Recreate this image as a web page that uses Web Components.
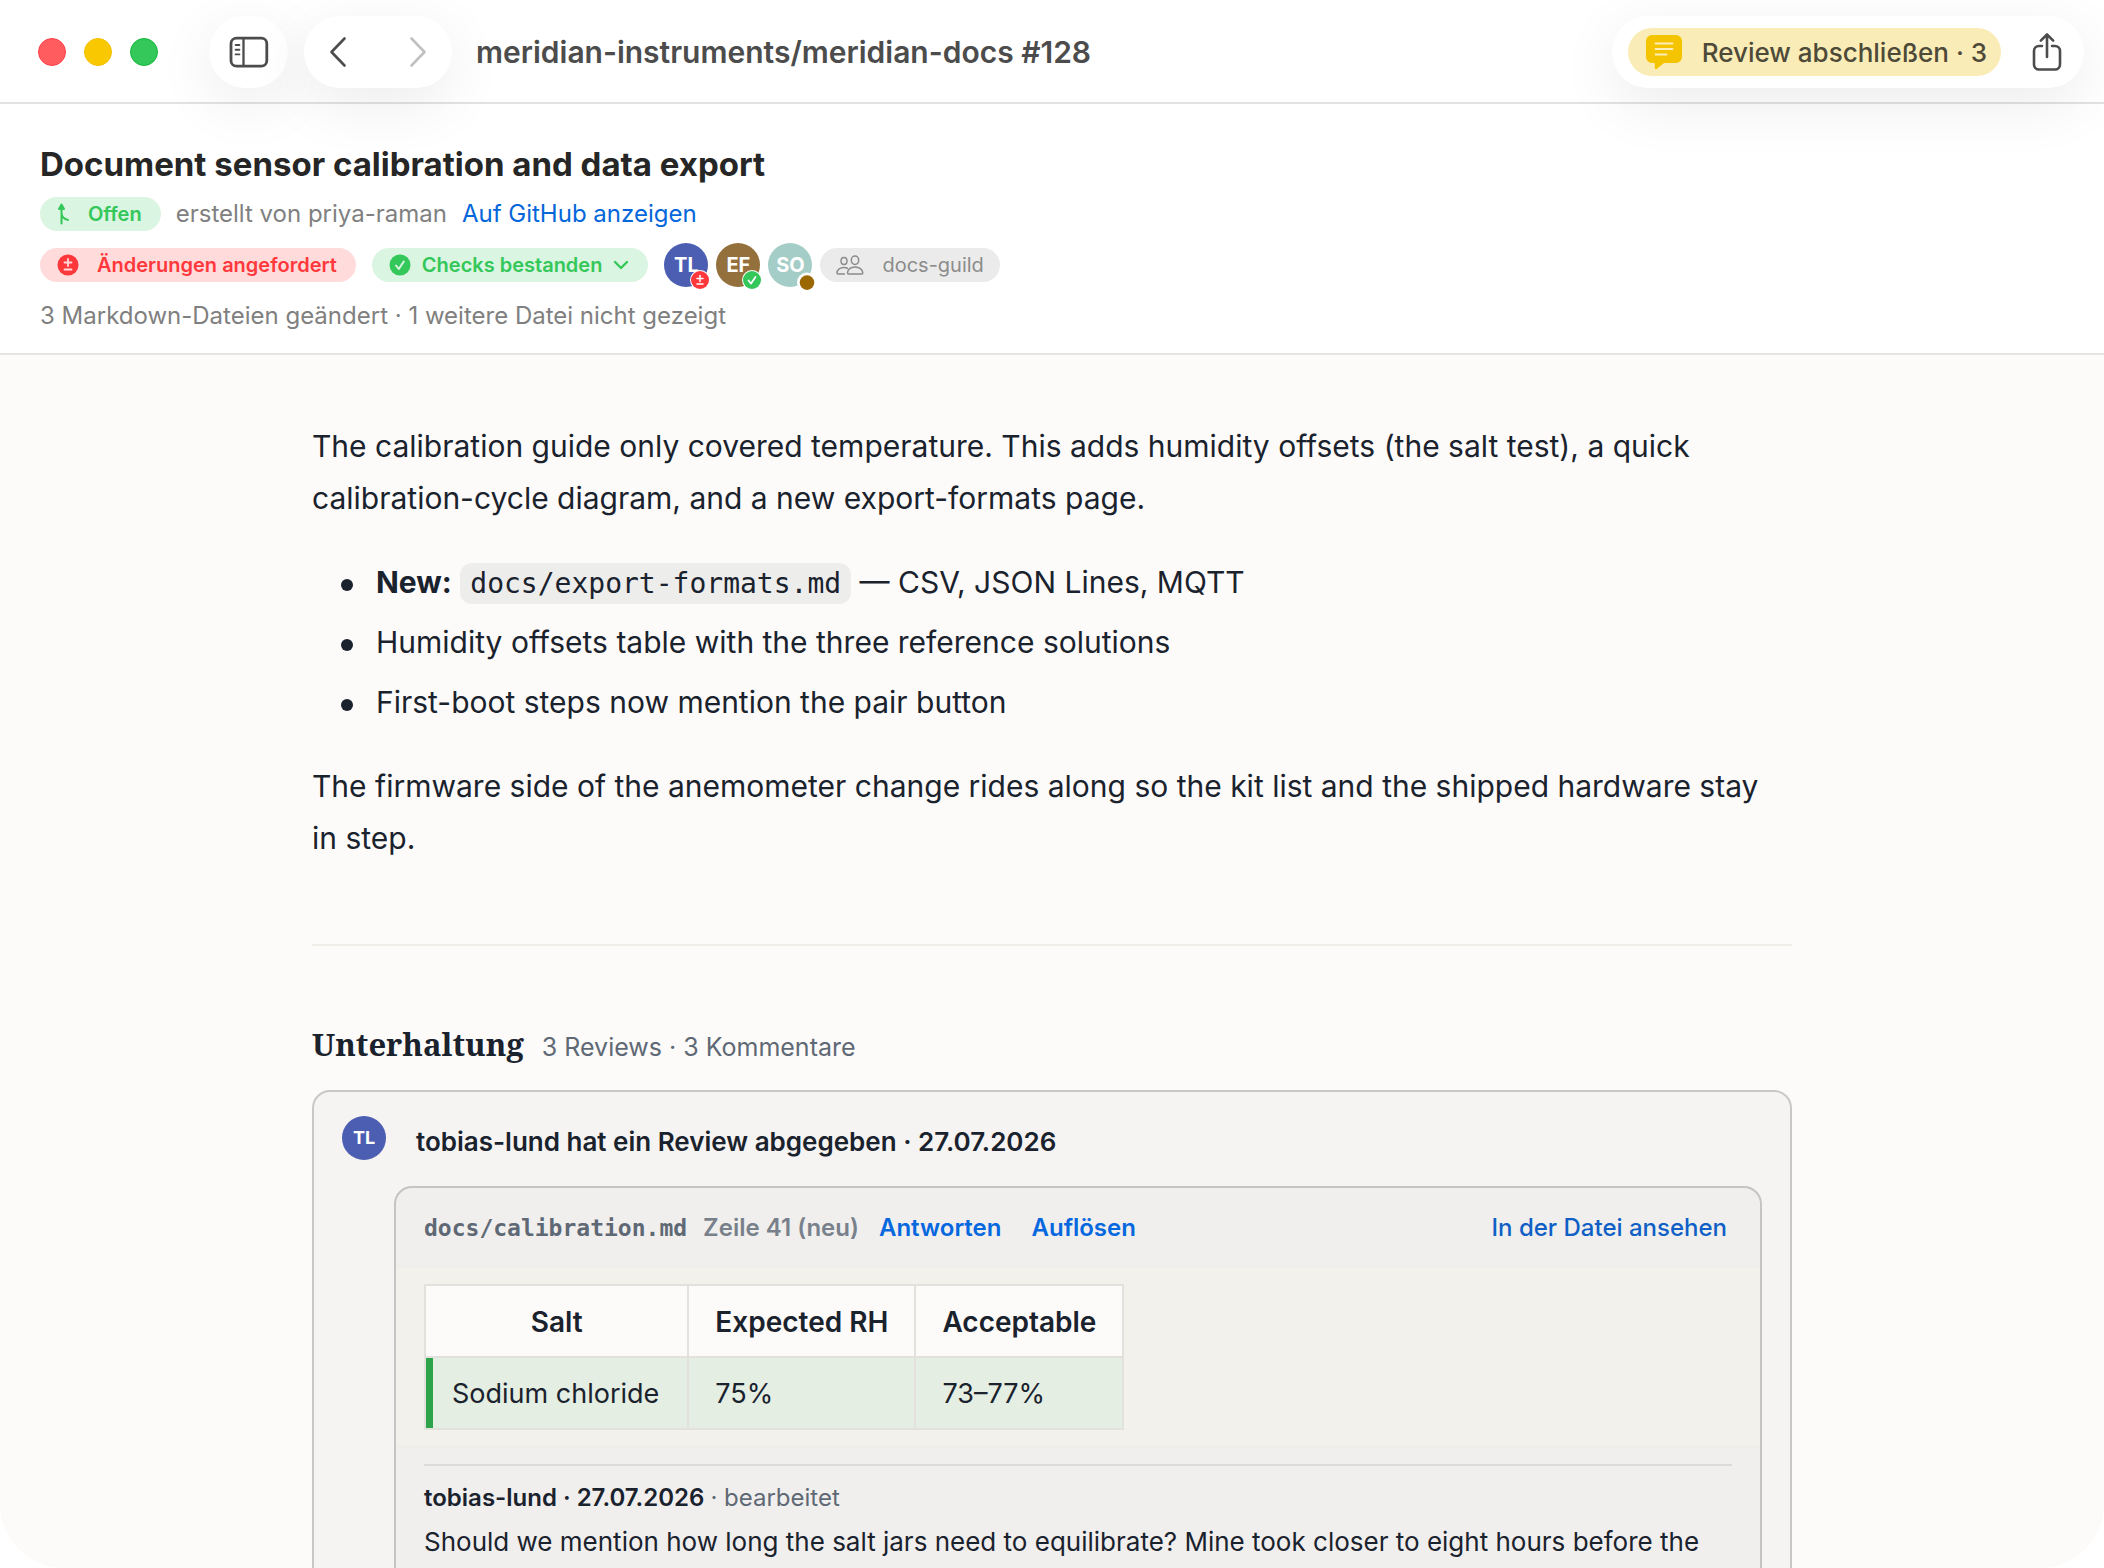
<!DOCTYPE html>
<html lang="de">
<head>
<meta charset="utf-8">
<meta name="viewport" content="width=device-width, initial-scale=1">
<title>meridian-instruments/meridian-docs #128</title>
<style>
  :root {
    --ui: Inter, "Liberation Sans", sans-serif;
    --mono: "DejaVu Sans Mono", "Liberation Mono", monospace;
    --serif: "Noto Serif", "Liberation Serif", serif;
    --ink: #1a222d;
    --muted: #5f6975;
    --link: #0366da;
    --paper: #fcfbf9;
    --fs-s: 20px;
    --fs-m: 24px;
    --fs-l: 26px;
    --fs-xl: 30px;
  }
  html, body { margin: 0; height: 100%; background: #fff; }
  body { font-family: var(--ui); overflow: hidden; color: var(--ink); }
</style>
</head>
<body>
<app-window>
  <app-toolbar slot="toolbar" heading="meridian-instruments/meridian-docs #128"></app-toolbar>
  <pr-header slot="header"></pr-header>
  <pr-description></pr-description>
  <pr-conversation>
    <review-card initials="TL" heading="tobias-lund hat ein Review abgegeben · 27.07.2026">
      <review-thread path="docs/calibration.md" line="Zeile 41 (neu)">
        <diff-table slot="context"></diff-table>
        <thread-comment author="tobias-lund · 27.07.2026" note="· bearbeitet">Should we mention how long the salt jars need to equilibrate? Mine took closer to eight hours before the</thread-comment>
      </review-thread>
    </review-card>
  </pr-conversation>
</app-window>

<script>
const define = (name, html) => customElements.define(name, class extends HTMLElement {
  constructor() {
    super();
    const root = this.attachShadow({ mode: "open" });
    const tpl = document.createElement("template");
    tpl.innerHTML = "<style>:host,*{box-sizing:border-box}</style>" + (typeof html === "function" ? html(this) : html);
    root.append(tpl.content.cloneNode(true));
  }
});

define("app-window", `
<style>
  :host { display: flex; flex-direction: column; height: 100vh; overflow: hidden;
    border-radius: 0 0 64px 64px; background: var(--paper); }
  .top { position: relative; z-index: 1; }
  main { flex: 1; min-height: 0; overflow: hidden; padding: 65px 40px 0; }
  .column { max-width: 1480px; margin: 0 auto; }
</style>
<div class="top"><slot name="toolbar"></slot></div>
<slot name="header"></slot>
<main><div class="column"><slot></slot></div></main>`);

define("tool-group", `
<style>
  :host { display: flex; align-items: center; height: 72px; border-radius: 36px; background: #fff;
    box-shadow: 0 16px 60px rgba(0,0,0,.08); }
</style><slot></slot>`);

define("window-lights", `
<style>
  :host { display: flex; gap: 18px; }
  button { width: 28px; height: 28px; padding: 0; border: 1px solid; border-radius: 50%; }
  .close { background: #ff5c60; border-color: #fb4248; }
  .min { background: #fac800; border-color: #f3c000; }
  .zoom { background: #34c759; border-color: #14b83c; }
</style>
<button class="close" aria-label="Schließen"></button>
<button class="min" aria-label="Minimieren"></button>
<button class="zoom" aria-label="Vollbild"></button>`);

define("app-toolbar", el => `
<style>
  :host { display: flex; align-items: center; height: 104px; padding: 2px 20px 0 38px;
    background: #fff; border-bottom: 2px solid #e2e2e2; }
  window-lights { margin-right: 51px; }
  .nav { margin: 0 24px 0 16px; gap: 12px; }
  h1 { flex: 1; margin: 0; font-size: var(--fs-xl); line-height: 36px; font-weight: 600; color: #4c4c4c; white-space: nowrap; }
  button { display: flex; align-items: center; justify-content: center; padding: 0; border: 0; background: none;
    font: inherit; color: #4c4c4c; height: 72px; }
  .side { width: 79px; }
  .nav button { width: 68px; }
  .nav button:disabled { color: #c0c0c0; }
  .finish { height: 48px; margin-left: 16px; padding: 0 14px 0 18px; gap: 20px; border-radius: 24px; background: #faecb6;
    color: #4d4a39; font-size: var(--fs-l); font-weight: 500; white-space: nowrap; }
  .share { width: 83px; padding-left: 9px; }
  svg { flex: none; }
  .line { fill: none; stroke: currentColor; stroke-linecap: round; stroke-linejoin: round; }
</style>
<window-lights></window-lights>
<tool-group><button class="side" aria-label="Seitenleiste">
  <svg class="line" width="40" height="32" viewBox="0 0 40 32" stroke-width="2.8"><rect x="2" y="2.2" width="35.800" height="28" rx="5.5"/><path d="M14.500 2.500v27" stroke-width="2.3"/><path d="M6.600 9h3.800M6.600 13.700h3.800M6.600 18.400h3.800" stroke-width="1.9"/></svg>
</button></tool-group>
<tool-group class="nav">
  <button aria-label="Zurück"><svg class="line" width="18" height="32" viewBox="0 0 18 32" stroke-width="2.6"><path d="M15.500 2.500 2.500 16l13 13.500"/></svg></button>
  <button aria-label="Vorwärts" disabled><svg class="line" width="18" height="32" viewBox="0 0 18 32" stroke-width="2.6"><path d="M2.500 2.500 15.500 16l-13 13.500"/></svg></button>
</tool-group>
<h1>${el.getAttribute("heading")}</h1>
<tool-group>
  <button class="finish">
    <svg width="36" height="36" viewBox="0 0 36 36"><path fill="#f5c400" d="M6 1h24a6 6 0 0 1 6 6v16a6 6 0 0 1-6 6H18l-7 5.800c-1 .8-2.200.4-2.200-1V29H6a6 6 0 0 1-6-6V7a6 6 0 0 1 6-6z"/><path d="M9.500 9.500h17M9.500 15h17M9.500 20.500h11" fill="none" stroke="#fbeeb9" stroke-width="1.8" stroke-linecap="round"/></svg>
    <span>Review abschließen · 3</span>
  </button>
  <button class="share" aria-label="Teilen">
    <svg class="line" width="32" height="40" viewBox="0 0 32 40" stroke-width="2.6"><path d="M11 14H8a5 5 0 0 0-5 5v13.500a5 5 0 0 0 5 5h16a5 5 0 0 0 5-5V19a5 5 0 0 0-5-5h-3M16 25V3M9.800 8.700 16 2.500l6.200 6.200"/></svg>
  </button>
</tool-group>`);

define("status-pill", `
<style>
  :host { display: inline-flex; align-items: center; height: 34px; padding: 0 19px 0 17px; border-radius: 17px;
    font-size: var(--fs-s); line-height: 24px; font-weight: 600; white-space: nowrap; }
  :host([tone="green"]) { background: #daf5e1; color: #34c759; }
  :host([tone="red"]) { background: #ffdbdb; color: #ff383c; }
  :host([tone="gray"]) { background: #ebebeb; color: #8c8c8c; font-weight: 400; padding: 0 16px; }
</style><slot></slot>`);

define("user-avatar", el => `
<style>
  :host { position: relative; display: inline-flex; align-items: center; justify-content: center;
    width: 44px; height: 44px; flex: none; border-radius: 50%; color: #fff; background: var(--tint, #4b5eb2);
    font-size: ${el.getAttribute("size") || "20px"}; font-weight: 700; line-height: 1; }
  .badge { position: absolute; right: -2px; bottom: -3px; display: flex; }
</style>
<span>${el.getAttribute("initials")}</span><span class="badge"><slot></slot></span>`);

define("pr-header", `
<style>
  :host { display: flex; flex-direction: column; gap: 6px; background: #fff; padding: 38px 40px 15px; border-bottom: 2px solid #e4e4e3; }
  h2 { margin: 0; font-size: 33px; line-height: 44px; font-weight: 700; color: #262626; }
  .row { display: flex; align-items: center; height: 44px; font-size: var(--fs-m); line-height: 32px; color: #808080; white-space: nowrap; }
  .row.meta { gap: 15px; }
  .rows { display: flex; flex-direction: column; gap: 7px; }
  a { color: var(--link); text-decoration: none; }
  svg { flex: none; }
  .avatars { display: flex; gap: 8px; margin: 0 8px 0 16px; }
  status-pill + status-pill { margin-left: 16px; }
  .toggle { display: flex; align-items: center; border: 0; background: none; padding: 0; font: inherit; color: inherit; gap: 11px; }
</style>
<h2>Document sensor calibration and data export</h2>
<div class="rows">
<div class="row meta">
  <status-pill tone="green"><svg width="14" height="22" viewBox="0 0 14 22" fill="none" stroke="currentColor" stroke-width="2" stroke-linecap="round" stroke-linejoin="round" style="margin-right:17px"><path d="M4.500 20.500V5M4.500 10c0 3.800 1.500 5.700 6.500 7"/><path d="M4.500 1.500 7 6H2z" fill="currentColor"/></svg>Offen</status-pill>
  <span>erstellt von priya-raman</span>
  <a href="#github">Auf GitHub anzeigen</a>
</div>
<div class="row">
  <status-pill tone="red"><svg width="22" height="22" viewBox="0 0 22 22" style="margin-right:18px"><circle cx="11" cy="11" r="10.5" fill="currentColor"/><path d="M11 5v7M7.500 8.500h7M7.500 15.500h7" stroke="#ffdbdb" stroke-width="1.8" stroke-linecap="round"/></svg>Änderungen angefordert</status-pill>
  <status-pill tone="green"><button class="toggle"><svg width="22" height="22" viewBox="0 0 22 22"><circle cx="11" cy="11" r="10.5" fill="currentColor"/><path d="m7 11.500 2.800 3.500 5-7.500" fill="none" stroke="#daf5e1" stroke-width="2" stroke-linecap="round" stroke-linejoin="round"/></svg><span>Checks bestanden</span><svg width="16" height="10" viewBox="0 0 16 10" fill="none" stroke="currentColor" stroke-width="2.4" stroke-linecap="round" stroke-linejoin="round"><path d="m2 2 6 6 6-6"/></svg></button></status-pill>
  <div class="avatars">
    <user-avatar initials="TL"><svg width="20" height="20" viewBox="0 0 20 20"><circle cx="10" cy="10" r="10" fill="#fff"/><circle cx="10" cy="10" r="9" fill="#ff383c"/><path d="M10 5.500v6M7 8.500h6M7 14h6" stroke="#fff" stroke-width="1.5" stroke-linecap="round"/></svg></user-avatar>
    <user-avatar initials="EF" style="--tint:#94703d"><svg width="20" height="20" viewBox="0 0 20 20"><circle cx="10" cy="10" r="10" fill="#fff"/><circle cx="10" cy="10" r="9" fill="#34c759"/><path d="m6.500 10.500 2.500 3 4.500-6.500" fill="none" stroke="#fff" stroke-width="1.8" stroke-linecap="round" stroke-linejoin="round"/></svg></user-avatar>
    <user-avatar initials="SO" style="--tint:#a5cdc7"><svg width="20" height="20" viewBox="0 0 20 20" overflow="visible"><circle cx="13" cy="12.6" r="10" fill="#fff"/><circle cx="13" cy="12.6" r="7.3" fill="#9b6700"/></svg></user-avatar>
  </div>
  <status-pill tone="gray"><svg width="28" height="20" viewBox="0 0 28 20" fill="none" stroke="currentColor" stroke-width="1.5" stroke-linejoin="round" style="margin-right:18px"><ellipse cx="19" cy="5.2" rx="3.7" ry="4.2"/><path d="M11.500 18c0-3.500 3.200-6 7.500-6s7.800 2.500 7.800 6c0 .6-.4.900-1 .9H12.500c-.6 0-1-.3-1-.9z"/><ellipse cx="8" cy="6" rx="3" ry="3.5"/><path d="M9 18.900H2c-.7 0-1-.3-1-.9 0-3 2.800-5.500 6.800-5.500 1.800 0 3.200.4 4.200 1.100"/></svg>docs-guild</status-pill>
</div>
<div class="row">3 Markdown-Dateien geändert · 1 weitere Datei nicht gezeigt</div>
</div>`);

define("pr-description", `
<style>
  :host { display: block; font-size: var(--fs-xl); line-height: 52px; padding-bottom: 80px; border-bottom: 2px solid #efeee9; }
  p, ul { margin: 0 0 32px; }
  p:last-child { margin: 0; }
  ul { padding-left: 64px; list-style: none; }
  li::before { content: ""; display: inline-block; width: 12px; height: 12px; margin: 0 23px 0 -35px; border-radius: 50%;
    background: currentColor; vertical-align: middle; }
  li + li { margin-top: 8px; }
  b { font-weight: 700; }
  code { font-family: var(--mono); font-size: 28px; line-height: 40px; padding: 4px 10px; border-radius: 12px; background: #ededec; }
</style>
<p>The calibration guide only covered temperature. This adds humidity offsets (the salt test), a quick calibration-cycle diagram, and a new export-formats page.</p>
<ul>
  <li><b>New:</b> <code>docs/export-formats.md</code> — CSV, JSON Lines, MQTT</li>
  <li>Humidity offsets table with the three reference solutions</li>
  <li>First-boot steps now mention the pair button</li>
</ul>
<p>The firmware side of the anemometer change rides along so the kit list and the shipped hardware stay in&nbsp;step.</p>`);

define("pr-conversation", `
<style>
  :host { display: block; padding-top: 77px; }
  header { display: flex; align-items: baseline; gap: 18px; margin-bottom: 22px; line-height: 42px; white-space: nowrap; }
  h2 { margin: 0; font-family: var(--serif); font-size: 31px; font-weight: 700; }
  span { font-size: 25px; color: var(--muted); }
</style>
<header><h2>Unterhaltung</h2><span>3 Reviews · 3 Kommentare</span></header>
<slot></slot>`);

define("review-card", el => `
<style>
  :host { display: block; border: 2px solid #c9c8c6; border-radius: 18px; background: #f5f4f2; padding: 24px 28px 28px; }
  header { display: flex; align-items: flex-start; gap: 30px; height: 70px; }
  h3 { margin: 6px 0 0; font-size: var(--fs-l); line-height: 40px; font-weight: 600; white-space: nowrap; }
  .body { margin-left: 52px; }
</style>
<header><user-avatar initials="${el.getAttribute("initials")}" size="18px"></user-avatar><h3>${el.getAttribute("heading")}</h3></header>
<div class="body"><slot></slot></div>`);

define("review-thread", el => `
<style>
  :host { display: block; border: 2px solid #c5c4c2; border-radius: 18px; background: #f0efed; overflow: hidden; }
  header { display: flex; align-items: center; height: 78px; padding: 2px 33px 0 28px; font-size: var(--fs-m); line-height: 32px; font-weight: 600; white-space: nowrap; }
  .path { font-family: var(--mono); font-size: 23px; font-weight: 700; color: #5f6975; margin-right: 16px; }
  .line { color: #78818b; margin-right: 20px; }
  button { border: 0; background: none; padding: 0; font: inherit; color: #0668df; margin-right: 30px; }
  a { margin-left: auto; color: #0f5fc6; font-weight: 500; text-decoration: none; }
  .context { padding: 16px 28px; background: #f2f1ec; border: solid #efeee8; border-width: 2px 0; }
  .comments { padding: 16px 28px 28px; }
</style>
<header><span class="path">${el.getAttribute("path")}</span><span class="line">${el.getAttribute("line")}</span><button>Antworten</button><button>Auflösen</button><a href="#file">In der Datei ansehen</a></header>
<div class="context"><slot name="context"></slot></div>
<div class="comments"><slot></slot></div>`);

define("diff-table", `
<style>
  :host { display: block; }
  table { border-collapse: collapse; font-size: 27px; line-height: 38px; background: #fcfbf9; }
  th, td { border: 2px solid #e2e1dc; padding: 17px 26px 15px; height: 72px; text-align: left; white-space: nowrap; }
  th { font-size: 28px; font-weight: 600; }
  th:first-child { text-align: center; }
  td:first-child { padding-right: 28px; }
  .added td { background: #e4eee3; }
  .added td:first-child { box-shadow: inset 7px 0 #2da44a; }
</style>
<table>
  <thead><tr><th>Salt</th><th>Expected RH</th><th>Acceptable</th></tr></thead>
  <tbody><tr class="added"><td>Sodium chloride</td><td>75%</td><td>73–77%</td></tr></tbody>
</table>`);

define("thread-comment", el => `
<style>
  :host { display: block; border-top: 2px solid #dcdbd9; padding-top: 14px; }
  header { font-size: var(--fs-m); line-height: 36px; font-weight: 600; }
  header span { font-weight: 400; color: var(--muted); }
  p { margin: 4px 0 0; font-size: var(--fs-l); line-height: 44px; }
</style>
<header>${el.getAttribute("author")} <span>${el.getAttribute("note")}</span></header>
<p><slot></slot></p>`);
</script>
</body>
</html>
